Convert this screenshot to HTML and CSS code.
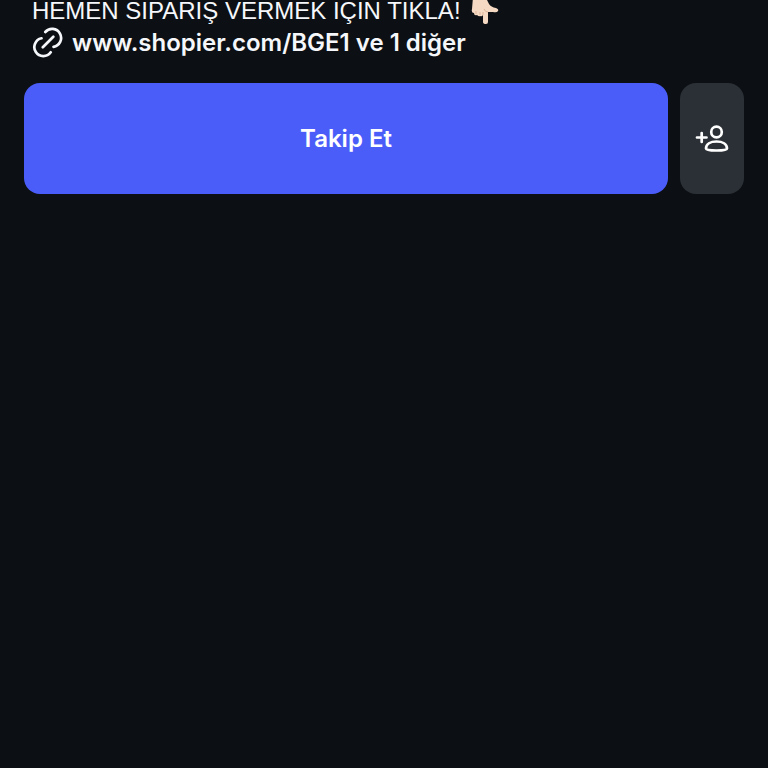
FILE: index.html
```html
<!DOCTYPE html>
<html lang="tr">
<head>
  <meta charset="UTF-8">
  <meta name="viewport" content="width=device-width, initial-scale=1.0">
  <title>Profil</title>
  <link rel="stylesheet" href="styles.css">
</head>
<body>
  <main class="profile">
    <section class="bio">
      <p class="bio-text">
        <span>HEMEN SİPARİŞ VERMEK İÇİN TIKLA!</span>
        <svg class="hand" viewBox="0 0 28 32" aria-hidden="true">
          <path fill="#f6d9c3" d="M2 2Q9 0 15 3L18 9Q20 12 25 13Q28 14 27 16Q26 18 22 17L17 17L17 27Q17 29 15 29Q12 29 12 27L12 20Q11 22 9 21Q8 22 6 20Q3 21 3 18Q0 18 1 14Z"/>
          <path fill="none" stroke="#dcb497" d="M12 20V17M9 20V17M5 19V16M17 17Q14 17 13 14"/>
        </svg>
      </p>
      <a class="bio-link" href="https://www.shopier.com/BGE1">
        <svg class="link-icon" viewBox="0 0 32 32" aria-hidden="true">
          <path d="M13.300 5A9 9 0 1 1 21.500 19.800M18.700 25.300A9 9 0 1 1 9.500 11.300M10.800 20.300L21.300 9.800"/>
        </svg>
        <span>www.shopier.com/BGE1 ve 1 diğer</span>
      </a>
    </section>

    <div class="actions">
      <button class="btn follow" type="button">Takip Et</button>
      <button class="btn suggest" type="button" aria-label="Benzer hesaplar">
        <svg class="person-icon" viewBox="0 0 34 28" aria-hidden="true">
          <circle cx="21.500" cy="7" r="5.300"/>
          <path d="M11 23.500C11 19 15.500 16.500 21.500 16.500S32 19 32 23.500Q32 25.500 21.500 25.500T11 23.500ZM2 12.500H11.500M6.700 8V17"/>
        </svg>
      </button>
    </div>
  </main>
</body>
</html>
```

FILE: styles.css
```css
body {
  margin: 0;
  min-height: 100vh;
  background-color: #0c1014;
  color: #f5f7fa;
  font-family: Inter, "Liberation Sans", sans-serif;
  font-size: 24px;
  line-height: 32px;
}
.profile {
  display: flow-root;
  margin-top: -5px;
  padding: 0 24px;
}
.bio {
  padding: 0 8px;
}
.bio-text {
  display: flex;
  align-items: center;
  gap: 10px;
  margin: 0;
  font-family: "Liberation Sans", Arial, sans-serif;
  white-space: nowrap;
}
.hand {
  width: 28px;
  height: 32px;
}
.bio-link {
  display: flex;
  align-items: center;
  gap: 8px;
  color: inherit;
  font-weight: 600;
  text-decoration: none;
  white-space: nowrap;
}
.link-icon {
  width: 32px;
  height: 32px;
}
.link-icon,
.person-icon {
  fill: none;
  stroke: currentColor;
  stroke-width: 2.7;
  stroke-linecap: round;
  stroke-linejoin: round;
}
.actions {
  display: flex;
  gap: 12px;
  margin-top: 24px;
}
.btn {
  display: flex;
  align-items: center;
  justify-content: center;
  height: 111px;
  padding: 0;
  border: none;
  border-radius: 16px;
  color: #fff;
  font: inherit;
  cursor: pointer;
}
.follow {
  flex: 1;
  background-color: #4a5df9;
  font-weight: 600;
}
.suggest {
  width: 64px;
  background-color: #2b3036;
}
.person-icon {
  width: 34px;
  height: 28px;
}
```
